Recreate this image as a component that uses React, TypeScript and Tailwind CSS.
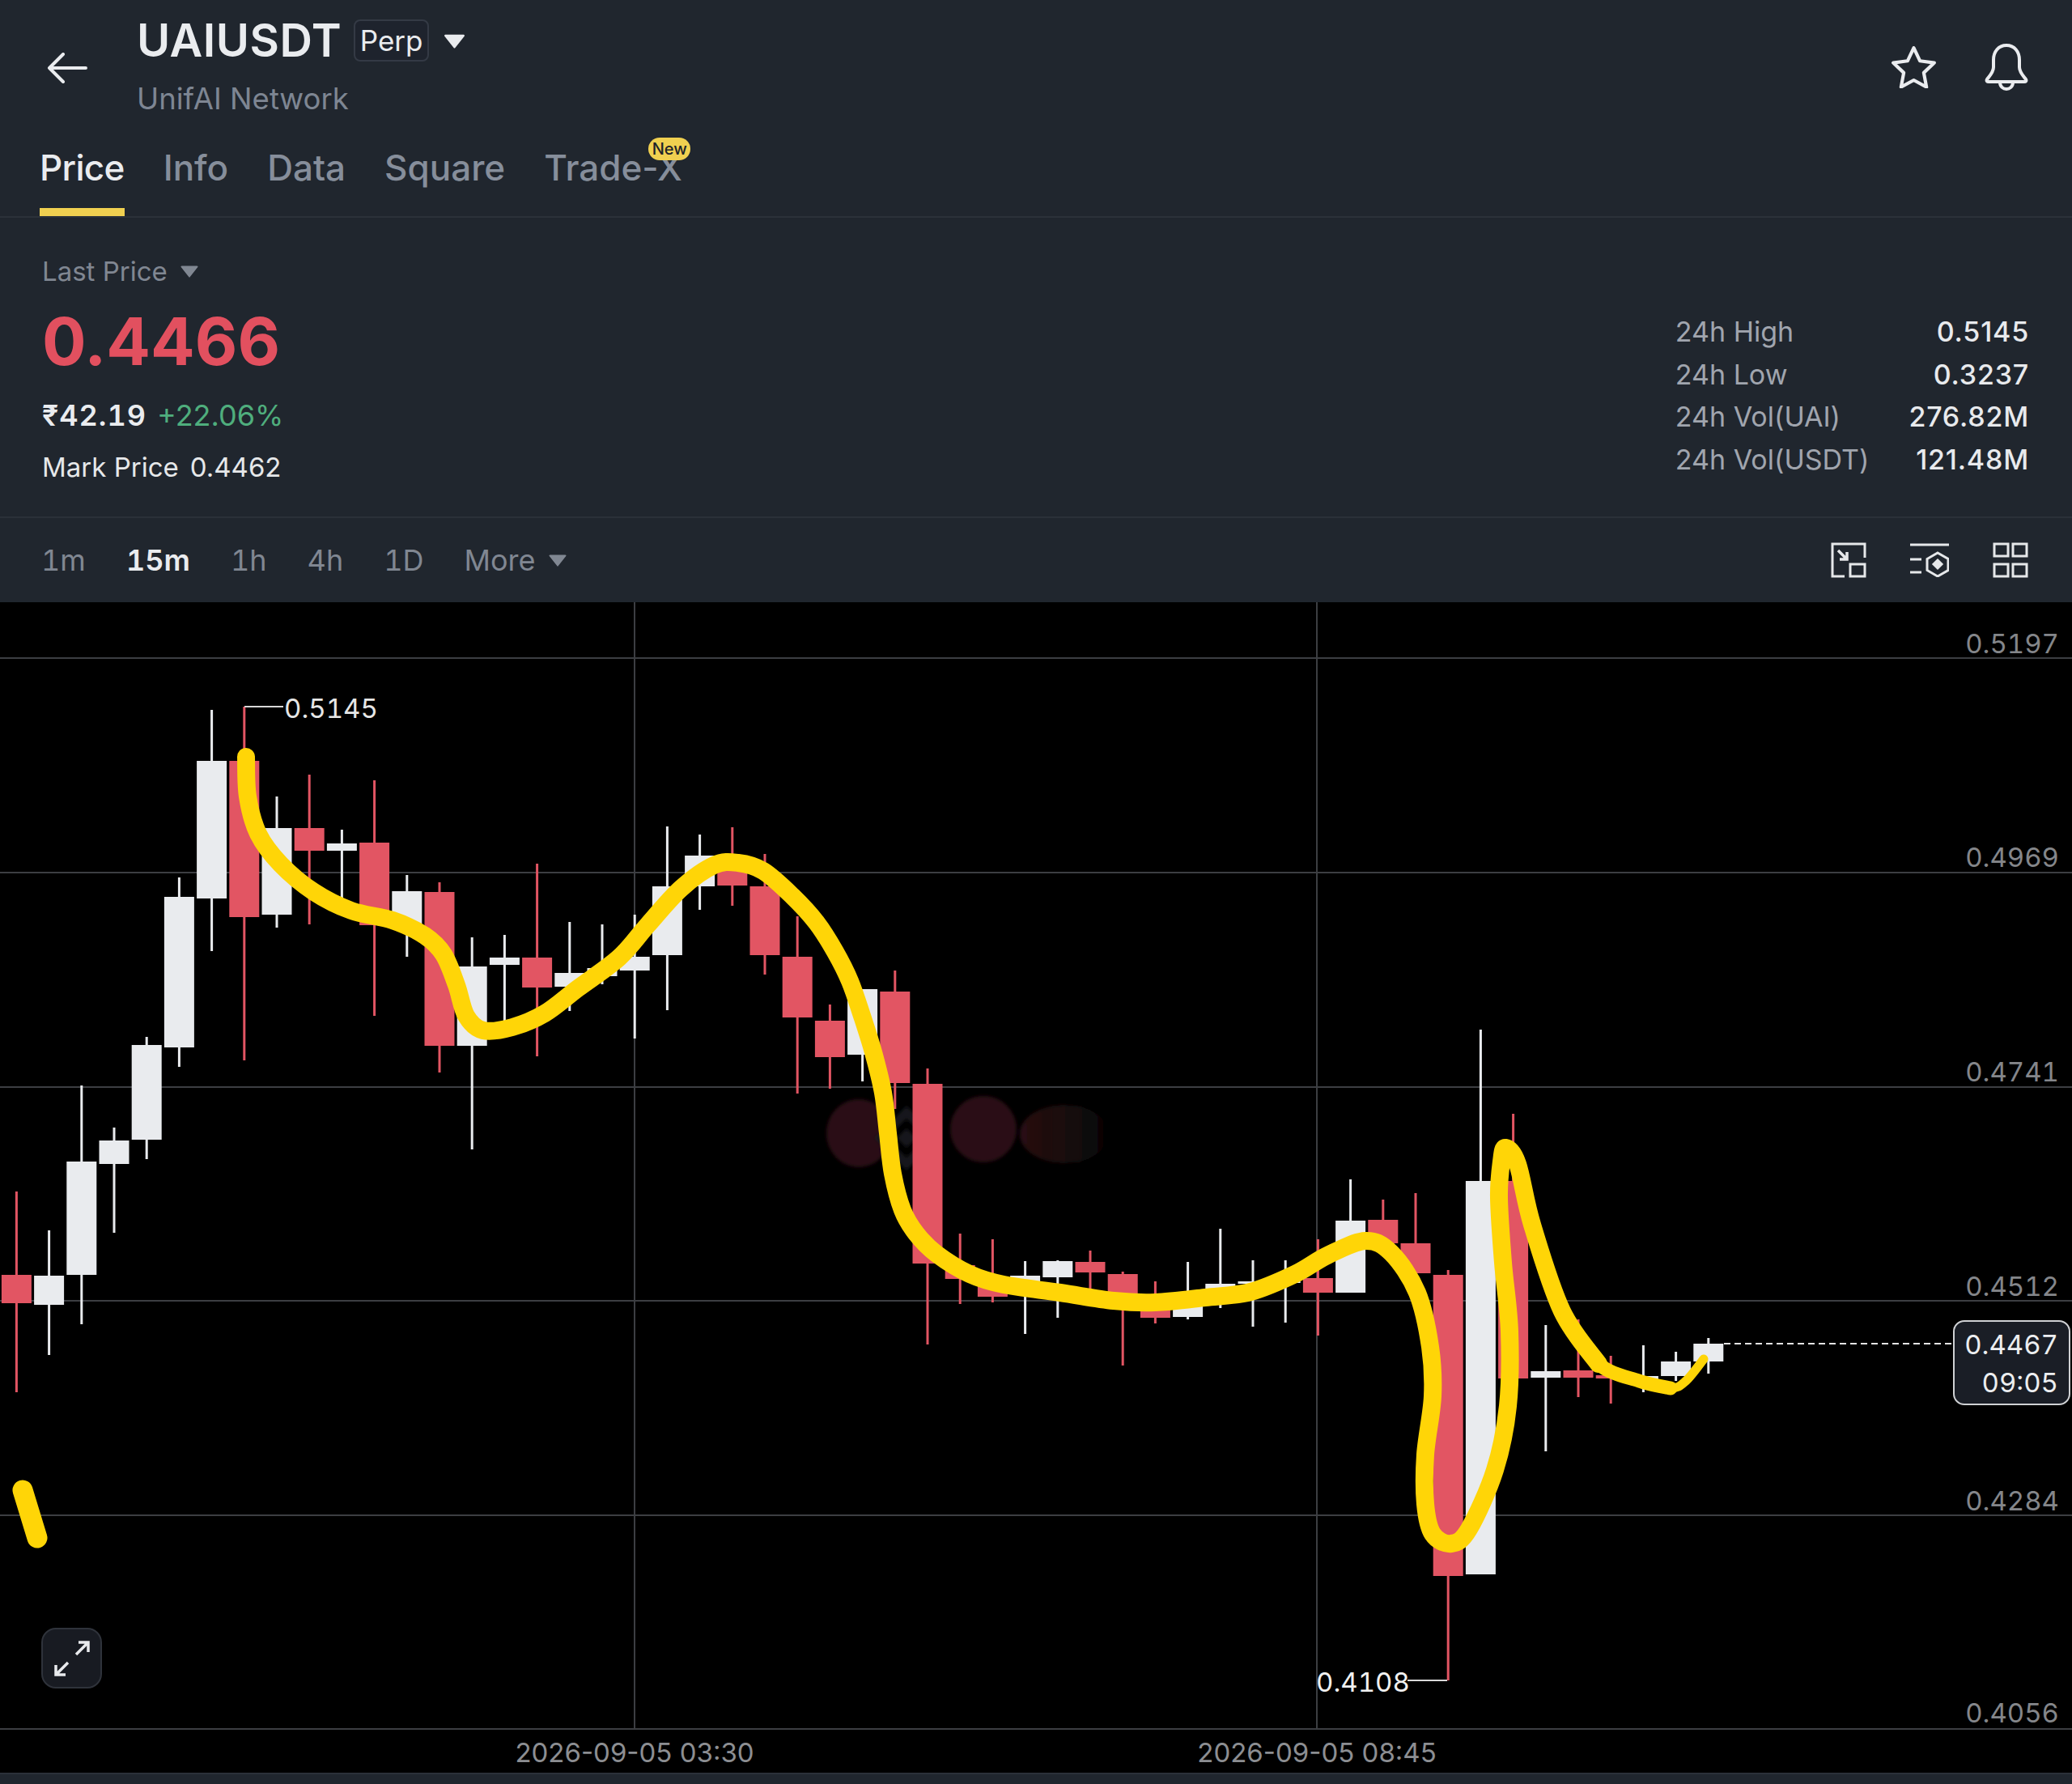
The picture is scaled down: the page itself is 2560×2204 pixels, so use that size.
import React from 'react';

type Candle = [string, number, number, number, number];

// kind, body top, body bottom, wick top, wick bottom (page y coordinates)
const candles: Candle[] = [
  ['r', 1575, 1610, 1472, 1720],
  ['w', 1576, 1612, 1520, 1674],
  ['w', 1435, 1575, 1341, 1636],
  ['w', 1409, 1438, 1393, 1523],
  ['w', 1291, 1408, 1281, 1432],
  ['w', 1108, 1294, 1084, 1318],
  ['w', 940, 1110, 877, 1175],
  ['r', 940, 1133, 873, 1310],
  ['w', 1023, 1130, 984, 1146],
  ['r', 1023, 1051, 957, 1142],
  ['w', 1042, 1051, 1025, 1114],
  ['r', 1041, 1143, 964, 1255],
  ['w', 1101, 1145, 1081, 1182],
  ['r', 1102, 1292, 1090, 1325],
  ['w', 1194, 1292, 1158, 1420],
  ['w', 1183, 1192, 1155, 1263],
  ['r', 1183, 1220, 1067, 1305],
  ['w', 1202, 1219, 1139, 1249],
  ['w', 1196, 1206, 1142, 1216],
  ['w', 1182, 1199, 1130, 1283],
  ['w', 1095, 1180, 1021, 1248],
  ['w', 1057, 1095, 1031, 1124],
  ['r', 1057, 1094, 1022, 1119],
  ['r', 1095, 1180, 1055, 1204],
  ['r', 1182, 1257, 1132, 1351],
  ['r', 1261, 1306, 1241, 1345],
  ['w', 1222, 1303, 1222, 1336],
  ['r', 1225, 1338, 1199, 1370],
  ['r', 1339, 1561, 1320, 1661],
  ['r', 1563, 1580, 1524, 1611],
  ['r', 1580, 1602, 1531, 1609],
  ['w', 1576, 1599, 1558, 1648],
  ['w', 1558, 1578, 1557, 1628],
  ['r', 1559, 1572, 1545, 1598],
  ['r', 1574, 1607, 1571, 1687],
  ['r', 1612, 1628, 1583, 1635],
  ['w', 1607, 1627, 1559, 1630],
  ['w', 1586, 1607, 1518, 1616],
  ['w', 1583, 1586, 1557, 1639],
  ['w', 1577, 1585, 1557, 1634],
  ['r', 1579, 1597, 1531, 1650],
  ['w', 1508, 1597, 1457, 1597],
  ['r', 1507, 1536, 1482, 1536],
  ['r', 1536, 1573, 1474, 1573],
  ['r', 1575, 1947, 1569, 2076],
  ['w', 1459, 1945, 1272, 1945],
  ['r', 1459, 1703, 1376, 1703],
  ['w', 1694, 1702, 1637, 1793],
  ['r', 1693, 1702, 1630, 1726],
  ['r', 1699, 1703, 1675, 1734],
  ['w', 1700, 1704, 1662, 1720],
  ['w', 1682, 1700, 1670, 1706],
  ['w', 1660, 1682, 1653, 1697],
];

// hand drawn marker line over the chart, it gets thinner towards the end
const scribble: [number, number][] = [
  [304, 935], [306, 984], [319, 1030], [347, 1068], [388, 1102], [434, 1125], [485, 1137], [525, 1156],
  [548, 1179], [564, 1217], [576, 1255], [597, 1273], [633, 1269], [673, 1252], [714, 1221], [765, 1183],
  [800, 1143], [841, 1098], [882, 1069], [912, 1066], [943, 1076], [979, 1107], [1009, 1140], [1032, 1176],
  [1050, 1212], [1065, 1255], [1079, 1300], [1091, 1350], [1097, 1400], [1103, 1450], [1115, 1495],
  [1132, 1524], [1157, 1549], [1198, 1574], [1240, 1587], [1310, 1597], [1376, 1607], [1427, 1609],
  [1489, 1603], [1545, 1596], [1600, 1574], [1640, 1551], [1687, 1533], [1719, 1548], [1751, 1597],
  [1767, 1664], [1770, 1725], [1761, 1797], [1761, 1858], [1770, 1895], [1793, 1907], [1815, 1889],
  [1847, 1816], [1863, 1737], [1865, 1645], [1857, 1560], [1852, 1480], [1855, 1435], [1860, 1418],
  [1875, 1438], [1893, 1513], [1930, 1620], [1975, 1685],
];
const scribbleTail: [number, number][] = [[1936, 1628], [1975, 1685], [2025, 1706], [2064, 1715]];
const scribbleEnd: [number, number][] = [[2025, 1706], [2064, 1715], [2083, 1706], [2105, 1679]];

const smoothPath = (pts: [number, number][]) => {
  let d = `M${pts[0][0]} ${pts[0][1]}`;
  for (let i = 0; i < pts.length - 1; i++) {
    const p0 = pts[Math.max(i - 1, 0)];
    const p1 = pts[i];
    const p2 = pts[i + 1];
    const p3 = pts[Math.min(i + 2, pts.length - 1)];
    const c1x = p1[0] + (p2[0] - p0[0]) / 6;
    const c1y = p1[1] + (p2[1] - p0[1]) / 6;
    const c2x = p2[0] - (p3[0] - p1[0]) / 6;
    const c2y = p2[1] - (p3[1] - p1[1]) / 6;
    d += ` C${c1x} ${c1y} ${c2x} ${c2y} ${p2[0]} ${p2[1]}`;
  }
  return d;
};

const stats = [
  ['24h High', '0.5145'],
  ['24h Low', '0.3237'],
  ['24h Vol(UAI)', '276.82M'],
  ['24h Vol(USDT)', '121.48M'],
];

const axis = [
  ['0.5197', 807],
  ['0.4969', 1071],
  ['0.4741', 1336],
  ['0.4512', 1601],
  ['0.4284', 1866],
  ['0.4056', 2128],
] as const;

const Caret = ({ className }: { className: string }) => (
  <svg viewBox="0 0 24 16" className={className} fill="currentColor">
    <path d="M2.5 1.5h19a1 1 0 0 1 .8 1.6l-9.5 12a1 1 0 0 1-1.6 0l-9.5-12a1 1 0 0 1 .8-1.6z" />
  </svg>
);

const Chart = () => (
  <div className="relative h-[1446px] bg-black">
    <svg viewBox="0 744 2560 1446" className="absolute inset-0 h-full w-full">
      <defs>
        <linearGradient id="wm" x1="0" x2="1" y1="0" y2="0">
          <stop offset="0" stopColor="#2a1113" />
          <stop offset="1" stopColor="#2a1113" stopOpacity="0" />
        </linearGradient>
        <linearGradient id="wmText" x1="0" x2="1" y1="0" y2="0">
          <stop offset="0" stopColor="#090909" />
          <stop offset="1" stopColor="#000000" stopOpacity="0" />
        </linearGradient>
        <filter id="soft">
          <feGaussianBlur stdDeviation="2" />
        </filter>
      </defs>
      {[813, 1078, 1343, 1607, 1872, 2136].map((y) => (
        <line key={y} x1="0" x2="2560" y1={y} y2={y} stroke="#3c3e42" strokeWidth="2" />
      ))}
      {[784, 1627].map((x) => (
        <line key={x} x1={x} x2={x} y1="744" y2="2136" stroke="#3c3e42" strokeWidth="2" />
      ))}

      {/* faded watermark */}
      <g filter="url(#soft)">
        <rect x="1300" y="1366" width="200" height="70" fill="url(#wmText)" />
        <ellipse cx="1061" cy="1400" rx="40" ry="42" fill="#2a1113" />
        <ellipse cx="1215" cy="1395" rx="41" ry="41" fill="#2a1113" />
        <ellipse cx="1315" cy="1401" rx="55" ry="36" fill="url(#wm)" />
        <path d="M1120 1374l32 32-32 32-32-32z" fill="none" stroke="#15181c" strokeWidth="11" />
        <path d="M1120 1394l12 12-12 12-12-12z" fill="#15181c" />
      </g>

      {candles.map(([kind, top, bottom, wickTop, wickBottom], i) => {
        const cx = 20.4 + i * 40.2;
        const fill = kind === 'r' ? '#e25563' : '#e9ebee';
        return (
          <g key={i} fill={fill}>
            <rect x={cx - 1.5} y={wickTop} width="3" height={wickBottom - wickTop} />
            <rect x={cx - 18.5} y={top} width="37" height={bottom - top} />
          </g>
        );
      })}

      <path d={smoothPath(scribble)} fill="none" stroke="#ffd507" strokeWidth="22" strokeLinecap="round" strokeLinejoin="round" />
      <path d={smoothPath(scribbleTail)} fill="none" stroke="#ffd507" strokeWidth="17" strokeLinecap="round" strokeLinejoin="round" />
      <path d={smoothPath(scribbleEnd)} fill="none" stroke="#ffd507" strokeWidth="11" strokeLinecap="round" strokeLinejoin="round" />
      <path d="M28 1841L46 1900" fill="none" stroke="#ffd507" strokeWidth="25" strokeLinecap="round" />

      <path d="M302 873H350" fill="none" stroke="#d8d8d8" strokeWidth="2" />
      <path d="M1739 2076H1788" fill="none" stroke="#d8d8d8" strokeWidth="2" />
      <line x1="2130" x2="2414" y1="1660" y2="1660" stroke="#e4e4e4" strokeWidth="2" strokeDasharray="8 5" />

      <g className="font-['Inter',sans-serif] text-[33px]">
        <g className="tabular-nums">
          <text x="351" y="887" fill="#e6e6e6">0.5145</text>
          <text x="1626" y="2090" fill="#f0f0f0">0.4108</text>
          {axis.map(([label, y]) => (
            <text key={label} x="2544" y={y} textAnchor="end" fill="#84868a">{label}</text>
          ))}
        </g>
        <text x="784" y="2177" textAnchor="middle" fill="#8c8e92">2026-09-05 03:30</text>
        <text x="1627" y="2177" textAnchor="middle" fill="#8c8e92">2026-09-05 08:45</text>
      </g>
    </svg>

    {/* current price tag */}
    <div className="absolute left-[2413px] top-[887px] flex h-[105px] w-[145px] flex-col items-end justify-center rounded-[14px] border-2 border-[#cfd1d4] bg-[#1a1e26] pr-[13px] pt-[2px] text-[33px] leading-[47px] tabular-nums text-[#eceef0]">
      <span>0.4467</span>
      <span>09:05</span>
    </div>

    <button className="absolute left-[51px] top-[1267px] flex h-[75px] w-[75px] items-center justify-center rounded-[18px] border-2 border-[#2f333b] bg-[#181b22]">
      <svg viewBox="0 0 46 46" className="h-[46px] w-[46px]" fill="none" stroke="#e8eaed" strokeWidth="3.5">
        <path d="M28 18L43 3M31 3h12v12" />
        <path d="M18 28L3 43M15 43H3V31" />
      </svg>
    </button>
  </div>
);

export default function App() {
  return (
    <div className="flex h-[2204px] w-full flex-col bg-[#20262e] font-['Inter',sans-serif]">
      <header className="h-[269px] border-b-2 border-[#2b3139]">
        <div className="flex h-[158px] pl-[58px] pr-[54px]">
          <svg viewBox="0 0 50 38" className="mt-[65px] h-[38px] w-[50px]" fill="none" stroke="#eaecef" strokeWidth="4" strokeLinecap="round" strokeLinejoin="round">
            <path d="M48 19H3M20 2L3 19l17 17" />
          </svg>
          <div className="ml-[61px] mt-[24px]">
            <div className="flex h-[52px] items-center">
              <span className="text-[56px] font-semibold tracking-[0.5px] text-[#eaecef]">UAIUSDT</span>
              <span className="ml-[15px] flex h-[52px] w-[93px] items-center justify-center rounded-[8px] border-2 border-[#343a45] bg-[#1e232d] text-[35px] text-[#eaecef]">Perp</span>
              <Caret className="ml-[17px] h-[19px] w-[29px] text-[#eaecef]" />
            </div>
            <div className="mt-[26px] text-[36.500px] leading-[40px] text-[#7e8693]">UnifAI Network</div>
          </div>
          <div className="ml-auto flex items-start gap-[60px]">
            <svg viewBox="1 1 52 50" className="mt-[57px] h-[52px] w-[55px]" fill="none" stroke="#eaecef" strokeWidth="4" strokeLinejoin="round">
              <path d="M27 3l7.4 15.6 17 2.2-12.5 11.8 3.2 17L27 41.4 11.900 49.600l3.200-17L2.600 20.800l17-2.200z" />
            </svg>
            <svg viewBox="0 0 54 58" className="mt-[54px] h-[58px] w-[54px]" fill="none" stroke="#eaecef" strokeWidth="4" strokeLinejoin="round">
              <path d="M27 2C17 2 11 10 11 20v9c0 6-4 10-8 15-1 2 0 3 2 3h44c2 0 3-1 2-3-4-5-8-9-8-15v-9C43 10 37 2 27 2z" />
              <path d="M19 48c0 5 4 8 8 8s8-3 8-8" />
            </svg>
          </div>
        </div>
        <nav className="flex h-[109px] gap-[48px] pl-[49px] text-[44px] font-medium text-[#868e9b]">
          <div className="relative pt-[16px] tracking-[-0.7px] text-[#eaecef]">
            Price
            <span className="absolute bottom-0 left-0 right-0 h-[10px] bg-[#f0d050]" />
          </div>
          <div className="pt-[16px]">Info</div>
          <div className="pt-[16px]">Data</div>
          <div className="pt-[16px]">Square</div>
          <div className="relative pt-[16px]">
            Trade-X
            <span className="absolute left-[129px] top-[12px] flex h-[28px] w-[52px] items-center justify-center rounded-full bg-[#f0d050] text-[20px] text-[#1e2329]">New</span>
          </div>
        </nav>
      </header>

      <section className="flex h-[371px] justify-between border-b-2 border-[#2b3139] pl-[52px] pr-[53px]">
        <div>
          <div className="mt-[46px] flex items-center text-[33px] leading-[40px] text-[#808792]">
            Last Price
            <Caret className="ml-[15px] h-[16px] w-[24px]" />
          </div>
          <div className="mt-[27px] text-[81px] font-bold leading-[81px] text-[#e2505f]">0.4466</div>
          <div className="mt-[28px] flex items-center gap-[13px] text-[36px] leading-[44px]">
            <span className="font-semibold tracking-[1px] tabular-nums text-[#eaecef]">₹42.19</span>
            <span className="text-[#4fae7d]">+22.06%</span>
          </div>
          <div className="mt-[22px] flex gap-[14px] text-[33px] leading-[40px] text-[#e6e8ea]">
            <span>Mark Price</span>
            <span>0.4462</span>
          </div>
        </div>
        <div className="mt-[115px] grid h-[212px] grid-cols-[auto_auto] content-start gap-x-[49px] text-[34px]">
          {stats.map(([label, value]) => (
            <React.Fragment key={label}>
              <span className="h-[52.700px] leading-[52px] text-[#a0a5ae]">{label}</span>
              <span className="h-[52.700px] text-right font-medium leading-[52px] tracking-[0.8px] text-[#e8eaed]">{value}</span>
            </React.Fragment>
          ))}
        </div>
      </section>

      <div className="flex h-[104px] items-center justify-between pl-[51px] pr-[54px] text-[36px] tabular-nums text-[#808792]">
        <div className="flex items-center gap-[50px]">
          <span>1m</span>
          <span className="font-semibold text-[#eaecef]">15m</span>
          <span>1h</span>
          <span>4h</span>
          <span>1D</span>
          <span className="flex items-center">
            More
            <Caret className="ml-[15px] h-[16px] w-[24px]" />
          </span>
        </div>
        <div className="flex items-center gap-[54px] text-[#e6e8ea]">
          <svg viewBox="0 0 44 44" className="h-[44px] w-[44px]" fill="none" stroke="currentColor" strokeWidth="3">
            <path d="M17 42H2V2h40v17" />
            <rect x="24" y="27" width="18" height="15" />
            <path d="M9 10l11 11M20 12v9h-9" strokeWidth="3.500" />
          </svg>
          <svg viewBox="0 0 48 42" className="h-[42px] w-[48px]" fill="none" stroke="currentColor" strokeWidth="3">
            <path d="M0 2h48M0 20h14M0 36h14" />
            <path d="M34 12l13 7.500v14L34 41l-13-7.500v-14z" />
            <path d="M34 21l5 5-5 5-5-5z" fill="currentColor" />
          </svg>
          <svg viewBox="0 0 44 44" className="h-[44px] w-[44px]" fill="none" stroke="currentColor" strokeWidth="3">
            <rect x="2" y="2" width="17" height="15" />
            <rect x="25" y="2" width="17" height="15" />
            <rect x="2" y="27" width="17" height="15" />
            <rect x="25" y="27" width="17" height="15" />
          </svg>
        </div>
      </div>

      <Chart />
      <div className="flex-1 border-t-2 border-[#2b3139] bg-[#20262e]" />
    </div>
  );
}
